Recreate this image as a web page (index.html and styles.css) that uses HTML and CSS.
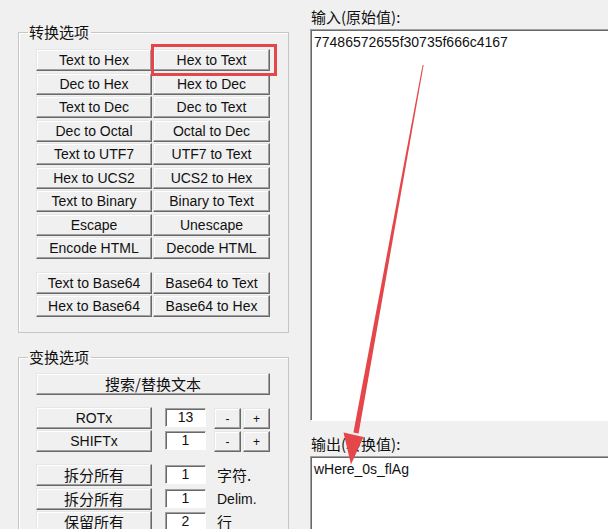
FILE: index.html
```html
<!DOCTYPE html>
<html lang="zh">
<head>
<meta charset="utf-8">
<title>Converter</title>
<link rel="stylesheet" href="styles.css">
</head>
<body>
<div class="app">
  <div class="left">
    <fieldset class="group g1">
      <legend>转换选项</legend>
      <div class="grid">
        <button class="btn">Text to Hex</button><button class="btn hl">Hex to Text</button>
        <button class="btn">Dec to Hex</button><button class="btn">Hex to Dec</button>
        <button class="btn">Text to Dec</button><button class="btn">Dec to Text</button>
        <button class="btn">Dec to Octal</button><button class="btn">Octal to Dec</button>
        <button class="btn">Text to UTF7</button><button class="btn">UTF7 to Text</button>
        <button class="btn">Hex to UCS2</button><button class="btn">UCS2 to Hex</button>
        <button class="btn">Text to Binary</button><button class="btn">Binary to Text</button>
        <button class="btn">Escape</button><button class="btn">Unescape</button>
        <button class="btn">Encode HTML</button><button class="btn">Decode HTML</button>
      </div>
      <div class="grid grid2">
        <button class="btn">Text to Base64</button><button class="btn">Base64 to Text</button>
        <button class="btn">Hex to Base64</button><button class="btn">Base64 to Hex</button>
      </div>
    </fieldset>
    <fieldset class="group g2">
      <legend>变换选项</legend>
      <button class="btn cjk wide">搜索/替换文本</button>
      <div class="rows">
        <div class="row"><button class="btn rb">ROTx</button><span class="edit">13</span><button class="btn sm">-</button><button class="btn sm sm2">+</button></div>
        <div class="row"><button class="btn rb">SHIFTx</button><span class="edit">1</span><button class="btn sm">-</button><button class="btn sm sm2">+</button></div>
      </div>
      <div class="rows rows2">
        <div class="row"><button class="btn rb cjk">拆分所有</button><span class="edit">1</span><span class="unit cjk">字符.</span></div>
        <div class="row"><button class="btn rb cjk">拆分所有</button><span class="edit">1</span><span class="unit">Delim.</span></div>
        <div class="row"><button class="btn rb cjk">保留所有</button><span class="edit">2</span><span class="unit cjk">行</span></div>
      </div>
    </fieldset>
  </div>
  <div class="right">
    <div class="lbl">输入(原始值):</div>
    <div class="box box-in">77486572655f30735f666c4167</div>
    <div class="lbl lbl2">输出(转换值):</div>
    <div class="box box-out">wHere_0s_flAg</div>
  </div>
  <svg class="arrow" width="608" height="529" viewBox="0 0 608 529">
    <polygon points="422.6,64.9 423.6,65.1 358.6,433.4 353.4,432.6" fill="#e5464a"/>
    <polygon points="343.5,432.5 363.5,437 351,464.5" fill="#e5464a"/>
  </svg>
</div>
</body>
</html>
```

FILE: styles.css
```css
html, body {
  margin: 0;
  padding: 0;
  background: #f0f0f0;
}
body {
  width: 608px;
  height: 529px;
  overflow: hidden;
  font-family: "Liberation Sans", Arial, "Noto Sans CJK SC", sans-serif;
  color: #000;
}
.app {
  position: relative;
  display: flex;
  width: 608px;
  height: 529px;
  overflow: hidden;
}
.left {
  width: 292px;
  padding: 23px 0 0 18px;
  flex: none;
  box-sizing: border-box;
}
.group {
  box-sizing: border-box;
  width: 271px;
  margin: 0;
  padding: 0 0 0 17px;
  border: 1px solid #c6c6c6;
  box-shadow: inset 1px 1px 0 #fff;
  min-width: 0;
}
.group legend {
  font-family: "Noto Sans CJK SC", sans-serif;
  font-size: 15px;
  line-height: 18px;
  height: 18px;
  padding: 0 2px 0 1px;
  margin-left: -8px;
  color: #111;
}
.g1 {
  padding-top: 8px;
  padding-bottom: 15px;
}
.g2 {
  margin-top: 15px;
  padding-top: 7px;
  padding-bottom: 30px;
}
.grid {
  display: grid;
  grid-template-columns: 116px 117px;
  column-gap: 1px;
  grid-auto-rows: 22px;
  row-gap: 1.5px;
}
.grid2 {
  margin-top: 12.5px;
}
.btn {
  box-sizing: border-box;
  margin: 0;
  padding: 0;
  height: 22px;
  background: #f0f0f0;
  border-style: solid;
  border-width: 1px 1px 1px 1px;
  border-color: #e6e6e6 #696969 #696969 #e6e6e6;
  box-shadow: inset -1px -1px 0 #a0a0a0, inset 1px 1px 0 #fff;
  font-family: "Liberation Sans", Arial, sans-serif;
  font-size: 14px;
  line-height: 18px;
  color: #111;
  text-align: center;
  white-space: nowrap;
  overflow: visible;
}
.cjk {
  font-family: "Noto Sans CJK SC", sans-serif;
  font-size: 15px;
}
.hl {
  position: relative;
}
.hl::after {
  content: "";
  position: absolute;
  left: -3px;
  right: -8px;
  top: -6px;
  bottom: -6px;
  border: 3px solid #e5464a;
  pointer-events: none;
}
.wide {
  display: block;
  width: 234px;
}
.rows {
  margin-top: 12px;
  display: flex;
  flex-direction: column;
  row-gap: 1px;
}
.rows2 {
  margin-top: 12px;
  row-gap: 1.5px;
}
.row {
  display: flex;
  align-items: flex-start;
  height: 22px;
}
.rb {
  width: 116px;
  flex: none;
}
.edit {
  box-sizing: border-box;
  width: 41px;
  height: 19px;
  margin: 1px 0 0 13px;
  background: #fff;
  border-style: solid;
  border-width: 1px;
  border-color: #a0a0a0 #fff #fff #a0a0a0;
  box-shadow: inset 1px 1px 0 #696969;
  font-size: 14px;
  line-height: 17px;
  text-align: center;
  color: #111;
}
.sm {
  width: 27px;
  height: 21px;
  margin: 1px 0 0 8px;
  font-size: 12px;
  flex: none;
}
.sm2 {
  margin-left: 2px;
}
.unit {
  margin: 1px 0 0 11px;
  font-size: 14px;
  line-height: 20px;
  color: #111;
}
.unit.cjk {
  font-size: 15px;
}
.right {
  flex: 1;
  min-width: 0;
  display: flex;
  flex-direction: column;
  padding-left: 18px;
}
.lbl {
  font-family: "Noto Sans CJK SC", sans-serif;
  font-size: 15px;
  line-height: 18px;
  height: 18px;
  padding: 8px 0 3px 1px;
  color: #111;
  white-space: nowrap;
}
.lbl2 {
  padding-top: 14px;
  padding-bottom: 3px;
}
.box {
  box-sizing: border-box;
  background: #fff;
  border-style: solid;
  border-width: 1px 0 1px 1px;
  border-color: #a0a0a0 #fff #fff #a0a0a0;
  box-shadow: inset 1px 1px 0 #696969;
  font-family: "Liberation Sans", Arial, sans-serif;
  font-size: 14px;
  line-height: 16px;
  padding: 4px 0 0 3px;
  color: #111;
  margin-right: -4px;
}
.box-in {
  height: 392px;
}
.box-out {
  flex: 1;
  border-bottom: none;
}
.arrow {
  position: absolute;
  left: 0;
  top: 0;
  pointer-events: none;
}
```
